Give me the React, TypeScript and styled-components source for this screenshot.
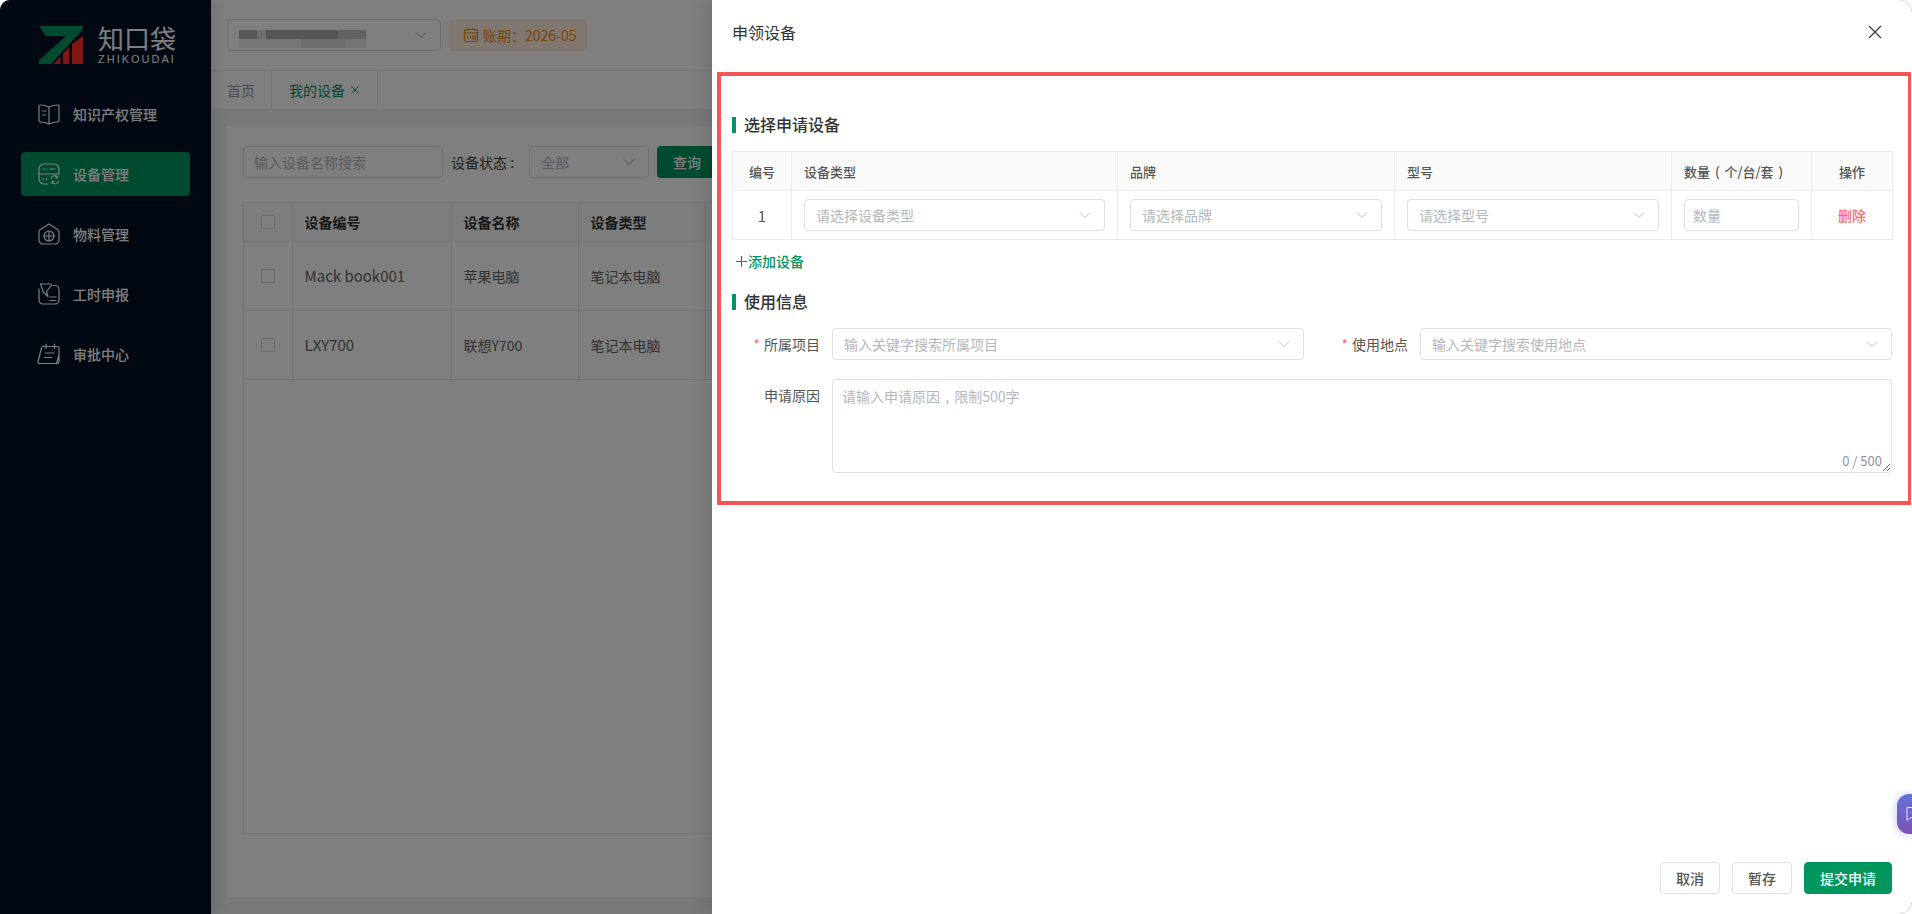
import * as React from 'react';
import styled, {createGlobalStyle} from 'styled-components';

const GlobalStyle = createGlobalStyle`
  html, body {
    margin: 0;
    padding: 0;
    background: #fff;
    overflow: hidden;
  }
  * {
    box-sizing: border-box;
  }
  body, input, textarea {
    font-family: "Noto Sans CJK SC", "Noto Sans", sans-serif;
    font-size: 14px;
  }
`;

const GREEN = '#00965e';

const Page = styled.div`
  position: relative;
  display: flex;
  width: 100vw;
  height: 100vh;
  overflow: hidden;
  border-radius: 10px 0 0 0;
  background: #f0f2f6;
`;

const Sidebar = styled.aside`
  flex: 0 0 211px;
  display: flex;
  flex-direction: column;
  background: #021024;
  box-shadow: 4px 0 12px rgba(0, 0, 0, .12);
  z-index: 1;
`;

const LogoRow = styled.div`
  display: flex;
  gap: 15px;
  height: 86px;
  padding: 25px 0 0 39px;
  margin-bottom: 6px;
`;

const LogoMark = styled.svg`
  margin-top: 1px;
`;

const LogoText = styled.div`
  display: flex;
  flex-direction: column;
  color: #fff;
`;

const LogoName = styled.span`
  font-size: 26px;
  line-height: 26px;
  letter-spacing: 0;
  white-space: nowrap;
`;

const LogoSub = styled.span`
  margin-top: 3px;
  font-size: 11px;
  line-height: 11px;
  letter-spacing: 2px;
  font-family: "Liberation Sans", sans-serif;
`;

const Menu = styled.nav`
  display: flex;
  flex-direction: column;
  gap: 16px;
  padding: 0 21px;
`;

const MenuItem = styled.div<{$active?: boolean}>`
  display: flex;
  align-items: center;
  gap: 13px;
  height: 44px;
  padding-left: 17px;
  border-radius: 4px;
  color: #fff;
  font-weight: 500;
  background: ${p => (p.$active ? GREEN : 'transparent')};
  svg {
    flex: none;
    overflow: visible;
    fill: none;
    stroke: #fff;
    stroke-width: 1.2;
    stroke-linecap: round;
    stroke-linejoin: round;
  }
`;

const Main = styled.main`
  flex: 1;
  display: flex;
  flex-direction: column;
  min-width: 0;
`;

const TopBar = styled.header`
  display: flex;
  align-items: center;
  gap: 8px;
  height: 71px;
  padding: 0 16px 1px;
  background: #fff;
  border-bottom: 1px solid #e8e8e8;
`;

const CompanySelect = styled.div`
  position: relative;
  display: flex;
  align-items: center;
  justify-content: flex-end;
  width: 214px;
  height: 32px;
  padding-right: 12px;
  background: #fff;
  border: 1px solid #d8dbe2;
  border-radius: 4px;
`;

const Mosaic = styled.svg`
  position: absolute;
  left: 11px;
  top: 9px;
  filter: blur(.5px);
`;

const PeriodTag = styled.div`
  display: flex;
  align-items: center;
  gap: 4px;
  width: 138px;
  height: 32px;
  padding-left: 14px;
  background: #ffefe0;
  border-radius: 4px;
  color: #f58a0f;
  white-space: nowrap;
`;

const TabBar = styled.div`
  display: flex;
  height: 39px;
  background: #fff;
  border-bottom: 1px solid #eceef2;
`;

const Tab = styled.div<{$active?: boolean}>`
  display: flex;
  align-items: center;
  gap: 6px;
  padding: 0 ${p => (p.$active ? '18px 0 17px' : '16px')};
  border-right: 1px solid #e8e8e8;
  color: ${p => (p.$active ? GREEN : '#999')};
`;

const Card = styled.section`
  flex: 1;
  margin: 16px 0 17px 16px;
  padding: 20px 16px 0;
  background: #fff;
`;

const Toolbar = styled.div`
  display: flex;
  align-items: center;
  height: 32px;
  margin-bottom: 24px;
`;

const SearchBox = styled.input`
  width: 200px;
  height: 32px;
  padding: 0 10px;
  margin-right: 8px;
  background: #fff;
  border: 1px solid #dcdfe6;
  border-radius: 4px;
  outline: none;
  &::placeholder {
    color: #b4b7bd;
    opacity: 1;
  }
`;

const FilterLabel = styled.span`
  width: 78px;
  color: #444;
  white-space: nowrap;
`;

const SelectBox = styled.div<{$width?: number}>`
  display: flex;
  flex: none;
  align-items: center;
  justify-content: space-between;
  width: ${p => (p.$width ? `${p.$width}px` : '100%')};
  height: 32px;
  padding: 0 12px 0 11px;
  background: #fff;
  border: 1px solid #dfe1e8;
  border-radius: 4px;
  color: #b4b7bd;
  white-space: nowrap;
`;

const QueryButton = styled.button`
  flex: none;
  width: 72px;
  height: 32px;
  margin-left: 8px;
  padding: 0 12px 0 0;
  background: ${GREEN};
  border: 0;
  border-radius: 4px;
  color: #fff;
  font: inherit;
  font-weight: 500;
`;

const ListBox = styled.div`
  height: 632px;
  border: 1px solid #e6e8ec;
`;

const ListTable = styled.table`
  width: 100%;
  table-layout: fixed;
  border-collapse: collapse;
  th, td {
    padding: 0 12px;
    border-bottom: 1px solid #e6e8ec;
    border-right: 1px solid #e6e8ec;
    text-align: left;
    white-space: nowrap;
  }
  th {
    height: 38px;
    background: #fafafa;
    color: #333;
    font-weight: 700;
  }
  td {
    height: 69px;
    color: #666;
  }
`;

const DeviceCode = styled.span`
  font-size: 15px;
`;

const CheckBox = styled.span`
  display: block;
  width: 14px;
  height: 14px;
  margin-left: 5px;
  background: #fff;
  border: 1px solid #d6d8de;
  border-radius: 2px;
`;

const Overlay = styled.div`
  position: absolute;
  inset: 0;
  z-index: 2;
  background: rgba(0, 0, 0, .5);
`;

const Drawer = styled.aside`
  position: absolute;
  top: 0;
  right: 0;
  bottom: 0;
  z-index: 3;
  display: flex;
  flex-direction: column;
  width: 1200px;
  background: #fff;
  box-shadow: -6px 0 16px rgba(0, 0, 0, .1);
`;

const DrawerHeader = styled.div`
  display: flex;
  flex: none;
  align-items: center;
  justify-content: space-between;
  height: 72px;
  padding: 0 30px 8px 20px;
  color: #333;
  font-size: 16px;
  line-height: 24px;
`;

const Annotated = styled.div`
  flex: none;
  height: 433px;
  margin-left: 5px;
  margin-right: 1px;
  padding: 35px 15px 0 11px;
  border: 4px solid #f55555;
  border-right-width: 3px;
`;

const SectionTitle = styled.h3<{$gap?: number}>`
  display: flex;
  align-items: center;
  gap: 8px;
  height: 26px;
  margin: ${p => p.$gap || 0}px 0 14px;
  color: #333;
  font-size: 16px;
  font-weight: 500;
  &::before {
    content: '';
    width: 4px;
    height: 16px;
    margin-top: 1px;
    background: ${GREEN};
  }
`;

const DeviceTable = styled.table`
  width: 1160px;
  table-layout: fixed;
  border-collapse: collapse;
  th, td {
    padding: 0 12px;
    border: 1px solid #eaebf0;
  }
  th {
    height: 39px;
    background: #fafafa;
    color: #555;
    font-size: 13px;
    font-weight: 500;
    text-align: left;
    word-spacing: 2px;
  }
  td {
    height: 49px;
  }
  th.center, td.center {
    padding: 0;
    text-align: center;
  }
`;

const RowNo = styled.span`
  color: #555;
  font-size: 15px;
`;

const DeleteLink = styled.span`
  color: #f56c6c;
  font-weight: 500;
`;

const QtyInput = styled.input`
  display: block;
  width: 100%;
  height: 32px;
  padding: 0 8px;
  background: #fff;
  border: 1px solid #dfe1e8;
  border-radius: 4px;
  outline: none;
  &::placeholder {
    color: #b4b7bd;
    opacity: 1;
  }
`;

const AddDevice = styled.div`
  display: flex;
  align-items: center;
  gap: 1px;
  height: 22px;
  margin: 10px 0 0 4px;
  color: ${GREEN};
  font-weight: 500;
`;

const FormGrid = styled.div`
  display: grid;
  grid-template-columns: 100px 472px 116px 472px;
  grid-template-rows: 32px 94px;
  row-gap: 19px;
`;

const FieldLabel = styled.label`
  align-self: start;
  padding-right: 12px;
  color: #555;
  line-height: 32px;
  text-align: right;
  white-space: nowrap;
`;

const Required = styled.span`
  margin-right: 4px;
  color: #f56c6c;
`;

const ReasonWrap = styled.div`
  position: relative;
  grid-column: 2 / 5;
`;

const ReasonInput = styled.textarea`
  display: block;
  width: 100%;
  height: 94px;
  padding: 5px 9px;
  border: 1px solid #dfe1e8;
  border-radius: 4px;
  outline: none;
  line-height: 22px;
  word-spacing: 2px;
  resize: vertical;
  &::placeholder {
    color: #b4b7bd;
    opacity: 1;
  }
`;

const Counter = styled.span`
  position: absolute;
  right: 10px;
  bottom: 2px;
  color: #909399;
  font-size: 13px;
  line-height: 20px;
`;

const DrawerFooter = styled.div`
  display: flex;
  flex: 1;
  align-items: flex-end;
  justify-content: flex-end;
  gap: 12px;
  padding: 0 20px 20px;
`;

const FooterButton = styled.button<{$primary?: boolean}>`
  height: 32px;
  width: ${p => (p.$primary ? '88px' : '60px')};
  padding: 0;
  background: ${p => (p.$primary ? GREEN : '#fff')};
  border: 1px solid ${p => (p.$primary ? GREEN : '#dfe1e8')};
  border-radius: 4px;
  color: ${p => (p.$primary ? '#fff' : '#555')};
  font: inherit;
  font-weight: 500;
`;

const ChatBubble = styled.div`
  position: absolute;
  top: 794px;
  right: 0;
  z-index: 4;
  width: 15px;
  height: 40px;
  padding: 12px 0 0 8px;
  overflow: hidden;
  border-radius: 12px 0 0 12px;
  background: linear-gradient(180deg, #6673d8, #7a52b4);
  box-shadow: 0 0 8px rgba(102, 115, 216, .45);
`;

const Corner = styled.span<{$bottom?: boolean}>`
  position: absolute;
  right: 0;
  z-index: 5;
  width: 12px;
  height: 12px;
  border-right: 1px solid #dcdcdc;
  ${p => (p.$bottom
    ? 'bottom: 0; border-bottom: 1px solid #dcdcdc; border-radius: 0 0 12px 0;'
    : 'top: 0; border-top: 1px solid #dcdcdc; border-radius: 0 12px 0 0;')}
`;

const Chevron = ({color = '#bcbfc6'}: {color?: string}) => (
  <svg width='14' height='14' viewBox='0 0 14 14' fill='none' stroke={color} strokeWidth='1'>
    <path d='M2 4.5 L7 9.5 L12 4.5'/>
  </svg>
);

const Logo = () => (
  <LogoMark width='44' height='38' viewBox='0 0 44 38'>
    <polygon fill={GREEN} points='0,0 44,0 44,3 12,38 0,38 0,34.500 27,10 7,10'/>
    <polygon fill='#ff2e2e' points='15,38 21.500,30.500 21.500,38'/>
    <polygon fill='#ff2e2e' points='24,38 24,27.500 30,21 30,38'/>
    <polygon fill='#ff2e2e' points='33,38 33,18 44,10 44,38'/>
  </LogoMark>
);

const BookIcon = () => (
  <svg width='22' height='22' viewBox='0 0 22 22'>
    <path d='M11 4C8 2.500 4 2 2.500 2A1.500 1.500 0 0 0 1 3.500V17.500A1.500 1.500 0 0 0 2.500 19C5 19 8 19.500 11 21C14 19.500 17 19 19.500 19A1.500 1.500 0 0 0 21 17.500V3.500A1.500 1.500 0 0 0 19.500 2C18 2 14 2.500 11 4ZM11 4V21M4.500 8H8M4.500 12H8'/>
  </svg>
);

const DeviceIcon = () => (
  <svg width='22' height='22' viewBox='0 0 22 22'>
    <path d='M10 21H6A5 5 0 0 1 1 16V6A5 5 0 0 1 6 1H16A5 5 0 0 1 21 6V11H1M5 6H6M8.500 6H9M12 6H17M5 15.500V17M8.500 15.500V17'/>
    <path d='M13 15.500A3.500 3.500 0 0 1 19.500 14.500M20.500 18A3.500 3.500 0 0 1 14 19M19.500 13V15H17.500M14 20.500V18.500H16'/>
  </svg>
);

const BoxIcon = () => (
  <svg width='22' height='22' viewBox='0 0 22 22'>
    <path d='M11 1L19.500 6.500A3 3 0 0 1 21 9V17A4 4 0 0 1 17 21H5A4 4 0 0 1 1 17V9A3 3 0 0 1 2.500 6.500Z'/>
    <circle cx='11' cy='13' r='5'/>
    <path d='M11 8V18M6 13H16'/>
  </svg>
);

const TimesheetIcon = () => (
  <svg width='22' height='22' viewBox='0 0 22 22'>
    <path d='M2.500 1H12.500A1 1 0 0 1 13.300 2.500L8.500 8.500L10 13.500L5.500 9.500Z'/>
    <path d='M15 2.500H17A4 4 0 0 1 21 6.500V17A4 4 0 0 1 17 21H5A4 4 0 0 1 1 17V6M12 14H18M12 17.500H18'/>
  </svg>
);

const ApprovalIcon = () => (
  <svg width='22' height='22' viewBox='1 0 22 22'>
    <path d='M6 3.500H20.500A1.500 1.500 0 0 1 22 5V18A2.500 2.500 0 0 1 19.500 20.500H2.500A1.500 1.500 0 0 1 1 18.500L4.500 5A2 2 0 0 1 6 3.500ZM9 1V5.500M17.500 1V5.500M8.500 10H17M7.500 14.500H15M19.500 20.500L22 12'/>
  </svg>
);

const CalendarIcon = () => (
  <svg width='16' height='16' viewBox='0 0 16 16' fill='none' stroke='#f58a0f' strokeWidth='1.200'>
    <rect x='1.500' y='2.500' width='13' height='12' rx='1.500'/>
    <path d='M1.500 6H14.500M5 .800V3.800M11 .800V3.800M4.500 9V12M7.500 9V12M10 9H12.500V12H10Z'/>
  </svg>
);

const CloseIcon = () => (
  <svg width='14' height='14' viewBox='0 0 14 14' stroke='#333' strokeWidth='1.100'>
    <path d='M1 1L13 13M13 1L1 13'/>
  </svg>
);

const TabCloseIcon = () => (
  <svg width='8' height='8' viewBox='0 0 8 8' stroke={GREEN} strokeWidth='1'>
    <path d='M.5 .5L7.500 7.500M7.500 .5L.5 7.500'/>
  </svg>
);

const PlusIcon = () => (
  <svg width='11' height='11' viewBox='0 0 11 11' stroke={GREEN} strokeWidth='1'>
    <path d='M5.500 0V11M0 5.500H11'/>
  </svg>
);

const ChatIcon = () => (
  <svg width='16' height='16' viewBox='0 0 16 16' fill='none' stroke='#e6e4fa' strokeWidth='1'>
    <path d='M2 1.500H14V11.500H6L2 14.500ZM5 6.500H5.500M8 6.500H8.500'/>
  </svg>
);

const blotches = [
  [0, 1, 18, 9, '#b0b0b0'], [18, 1, 9, 9, '#dcdcdc'], [27, 1, 72, 9, '#acacac'],
  [99, 1, 28, 9, '#c4c4c4'], [0, 10, 62, 9, '#ececec'], [62, 10, 45, 9, '#dedede'],
  [107, 10, 20, 9, '#e8e8e8'],
] as const;

const menu = [
  {label: '知识产权管理', icon: <BookIcon/>},
  {label: '设备管理', icon: <DeviceIcon/>, active: true},
  {label: '物料管理', icon: <BoxIcon/>},
  {label: '工时申报', icon: <TimesheetIcon/>},
  {label: '审批中心', icon: <ApprovalIcon/>},
];

const devices = [
  {code: 'Mack book001', name: '苹果电脑', type: '笔记本电脑'},
  {code: 'LXY700', name: '联想Y700', type: '笔记本电脑'},
];

export default function App() {
  return (
    <Page>
      <GlobalStyle/>
      <Sidebar>
        <LogoRow>
          <Logo/>
          <LogoText>
            <LogoName>知口袋</LogoName>
            <LogoSub>ZHIKOUDAI</LogoSub>
          </LogoText>
        </LogoRow>
        <Menu>
          {menu.map(item => (
            <MenuItem key={item.label} $active={item.active}>
              {item.icon}
              {item.label}
            </MenuItem>
          ))}
        </Menu>
      </Sidebar>

      <Main>
        <TopBar>
          <CompanySelect>
            <Mosaic width='127' height='19' viewBox='0 0 127 19'>
              {blotches.map(([x, y, w, h, fill]) => (
                <rect key={`${x}-${y}`} x={x} y={y} width={w} height={h} fill={fill}/>
              ))}
            </Mosaic>
            <Chevron color='#999'/>
          </CompanySelect>
          <PeriodTag>
            <CalendarIcon/>
            账期：2026-05
          </PeriodTag>
        </TopBar>
        <TabBar>
          <Tab>首页</Tab>
          <Tab $active>我的设备<TabCloseIcon/></Tab>
        </TabBar>
        <Card>
          <Toolbar>
            <SearchBox placeholder='输入设备名称搜索' readOnly/>
            <FilterLabel>设备状态 :</FilterLabel>
            <SelectBox $width={120}>全部<Chevron color='#999'/></SelectBox>
            <QueryButton>查询</QueryButton>
          </Toolbar>
          <ListBox>
            <ListTable>
              <colgroup>
                <col width='48'/>
                <col width='159'/>
                <col width='127'/>
                <col width='127'/>
                <col/>
              </colgroup>
              <thead>
                <tr>
                  <th><CheckBox/></th>
                  <th>设备编号</th>
                  <th>设备名称</th>
                  <th>设备类型</th>
                  <th/>
                </tr>
              </thead>
              <tbody>
                {devices.map(d => (
                  <tr key={d.code}>
                    <td><CheckBox/></td>
                    <td><DeviceCode>{d.code}</DeviceCode></td>
                    <td>{d.name}</td>
                    <td>{d.type}</td>
                    <td/>
                  </tr>
                ))}
              </tbody>
            </ListTable>
          </ListBox>
        </Card>
      </Main>

      <Overlay/>

      <Drawer>
        <DrawerHeader>
          申领设备
          <CloseIcon/>
        </DrawerHeader>
        <Annotated>
          <SectionTitle>选择申请设备</SectionTitle>
          <DeviceTable>
            <colgroup>
              <col width='59'/>
              <col width='326'/>
              <col width='277'/>
              <col width='277'/>
              <col width='140'/>
              <col width='81'/>
            </colgroup>
            <thead>
              <tr>
                <th className='center'>编号</th>
                <th>设备类型</th>
                <th>品牌</th>
                <th>型号</th>
                <th>数量 ( 个/台/套 )</th>
                <th className='center'>操作</th>
              </tr>
            </thead>
            <tbody>
              <tr>
                <td className='center'><RowNo>1</RowNo></td>
                <td><SelectBox>请选择设备类型<Chevron/></SelectBox></td>
                <td><SelectBox>请选择品牌<Chevron/></SelectBox></td>
                <td><SelectBox>请选择型号<Chevron/></SelectBox></td>
                <td><QtyInput placeholder='数量' readOnly/></td>
                <td className='center'><DeleteLink>删除</DeleteLink></td>
              </tr>
            </tbody>
          </DeviceTable>
          <AddDevice><PlusIcon/>添加设备</AddDevice>

          <SectionTitle $gap={16}>使用信息</SectionTitle>
          <FormGrid>
            <FieldLabel><Required>*</Required>所属项目</FieldLabel>
            <SelectBox>输入关键字搜索所属项目<Chevron/></SelectBox>
            <FieldLabel><Required>*</Required>使用地点</FieldLabel>
            <SelectBox>输入关键字搜索使用地点<Chevron/></SelectBox>
            <FieldLabel>申请原因</FieldLabel>
            <ReasonWrap>
              <ReasonInput placeholder='请输入申请原因 , 限制500字' readOnly/>
              <Counter>0 / 500</Counter>
            </ReasonWrap>
          </FormGrid>
        </Annotated>
        <DrawerFooter>
          <FooterButton>取消</FooterButton>
          <FooterButton>暂存</FooterButton>
          <FooterButton $primary>提交申请</FooterButton>
        </DrawerFooter>
      </Drawer>

      <ChatBubble><ChatIcon/></ChatBubble>
      <Corner/>
      <Corner $bottom/>
    </Page>
  );
}
